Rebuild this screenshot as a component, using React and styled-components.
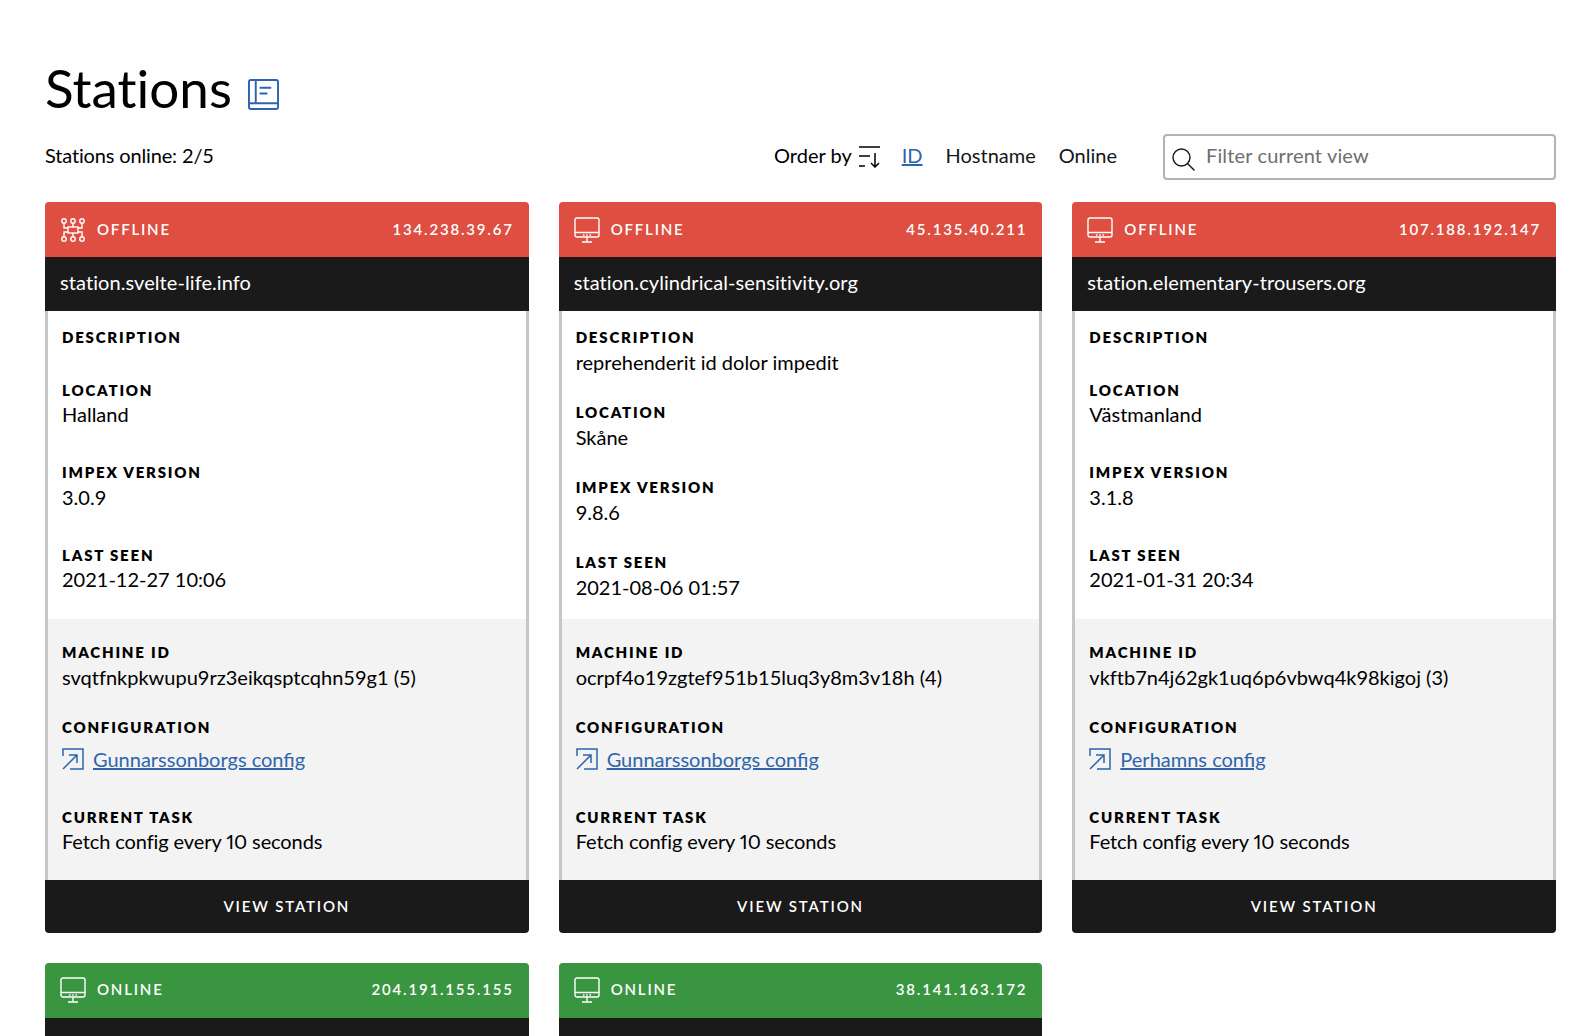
import React from 'react'
import styled, { createGlobalStyle } from 'styled-components'

const GlobalStyle = createGlobalStyle`
  body {
    margin: 0;
    background: #fefefe;
    color: #000;
    font-family: Lato, "Liberation Sans", sans-serif;
    font-size: 20px;
    font-variant-ligatures: none;
  }
`

const Page = styled.div`
  height: 1036px;
  overflow: hidden;
  box-sizing: border-box;
  padding: 55px 37px 0 45px;
`

const TitleRow = styled.div`
  display: flex;
  align-items: center;
  gap: 16px;
  height: 68px;
`

const Title = styled.h1`
  margin: 0 0 2px;
  font-size: 53px;
  font-weight: 400;
  line-height: 66px;
`

const BookIcon = styled.svg`
  width: 31px;
  height: 31px;
  margin-top: 11px;
  fill: none;
  stroke: #2d65ad;
  stroke-width: 2;
`

const Toolbar = styled.div`
  display: flex;
  align-items: center;
  margin-top: 11px;
  height: 46px;
`

const Online = styled.div`
  flex: 1;
  padding-bottom: 4px;
  letter-spacing: -0.15px;
`

const OrderBy = styled.div`
  display: flex;
  align-items: center;
  margin-right: 46px;
  padding-bottom: 4px;
`

const SortIcon = styled.svg`
  width: 22px;
  height: 22px;
  margin: 4px 21px 0 7px;
  fill: none;
  stroke: #000;
  stroke-width: 1.5;
`

const OrderLink = styled.a`
  margin-right: 23px;
  color: ${p => (p.$active ? '#2d65ad' : '#161616')};
  text-decoration: ${p => (p.$active ? 'underline' : 'none')};
  &:last-child {
    margin-right: 0;
  }
`

const Filter = styled.label`
  position: relative;
  display: block;
  width: 393px;
  height: 46px;
`

const FilterIcon = styled.svg`
  position: absolute;
  left: 9px;
  top: 14px;
  width: 23px;
  height: 23px;
  fill: none;
  stroke: #161616;
  stroke-width: 1.4;
`

const FilterInput = styled.input`
  width: 100%;
  height: 100%;
  box-sizing: border-box;
  border: 2px solid #b3b3b3;
  border-radius: 4px;
  padding: 0 12px 4px 41px;
  background: #fefefe;
  font: inherit;
  letter-spacing: 0.15px;
  outline: none;
  &::placeholder {
    color: #6f6f6f;
    opacity: 1;
  }
`

const Grid = styled.div`
  display: grid;
  grid-template-columns: repeat(3, 1fr);
  column-gap: 30px;
  row-gap: 30px;
  margin-top: 22px;
`

const Card = styled.article`
  display: flex;
  flex-direction: column;
`

const StatusBar = styled.div`
  display: flex;
  align-items: center;
  height: 55px;
  box-sizing: border-box;
  padding: 0 15px;
  border-radius: 4px 4px 0 0;
  background: ${p => (p.$online ? '#3a9541' : '#de4e41')};
  color: #fff;
  font-size: 15px;
  font-weight: 600;
  letter-spacing: 1.8px;
`

const StatusText = styled.span`
  margin-bottom: 2px;
`

const StatusIcon = styled.svg`
  width: 26px;
  height: 26px;
  margin-right: 11px;
  fill: none;
  stroke: #fff;
  stroke-width: 1.4;
`

const Ip = styled(StatusText)`
  margin-left: auto;
`

const HostBar = styled.div`
  height: 54px;
  padding: 0 15px;
  background: #1a1a1a;
  color: #fff;
  line-height: 51px;
  letter-spacing: 0.08px;
`

const Body = styled.div`
  display: flex;
  flex: 1;
  flex-direction: column;
  border: solid #c6c6c6;
  border-width: 0 3px;
`

const Details = styled.dl`
  display: grid;
  flex: 1;
  row-gap: 24.5px;
  margin: 0;
  padding: 16px 14px 16.5px;
`

const MoreDetails = styled(Details)`
  flex: none;
  row-gap: 24px;
  padding: 23px 14px 22px;
  background: #f3f3f3;
`

const Field = styled.div``

const Label = styled.dt`
  font-size: 15px;
  font-weight: 800;
  line-height: 20.5px;
  letter-spacing: 1.8px;
  text-transform: uppercase;
`

const Value = styled.dd`
  margin: 0;
  padding-bottom: 2px;
  line-height: 28px;
`

const TaskValue = styled(Value)`
  padding-bottom: 4px;
  line-height: 26px;
  font-variant-ligatures: common-ligatures;
  font-variant-numeric: proportional-nums;
  letter-spacing: -0.1px;
`

const ConfigValue = styled(Value)`
  display: flex;
  align-items: center;
  gap: 9px;
  height: 46px;
  box-sizing: border-box;
  padding-bottom: 3px;
`

const LaunchIcon = styled.svg`
  width: 22px;
  height: 22px;
  margin-top: 1px;
  fill: none;
  stroke: #2d65ad;
  stroke-width: 1.5;
`

const ConfigLink = styled.a`
  color: #2d65ad;
  text-decoration: underline;
  font-variant-ligatures: common-ligatures;
`

const ViewButton = styled.button`
  display: block;
  width: 100%;
  height: 53px;
  border: 0;
  border-radius: 0 0 4px 4px;
  background: #1a1a1a;
  color: #fff;
  font: inherit;
  font-size: 15px;
  font-weight: 600;
  letter-spacing: 1.85px;
`

const Network = () => (
  <StatusIcon viewBox="0 0 26 26">
    <circle cx="4" cy="4" r="2.2" />
    <circle cx="13" cy="4" r="2.2" />
    <circle cx="22" cy="4" r="2.2" />
    <circle cx="4" cy="22" r="2.2" />
    <circle cx="13" cy="22" r="2.2" />
    <circle cx="22" cy="22" r="2.2" />
    <rect x="8" y="10" width="10" height="6" />
    <path d="M13 6.2V10M13 16v3.8M4 6.2V11h4M22 6.2V11h-4M4 19.8V15h4M22 19.8V15h-4" />
  </StatusIcon>
)

const Monitor = () => (
  <StatusIcon viewBox="0 0 26 26">
    <rect x="1" y="1" width="24" height="19" rx="2" />
    <path d="M1 15.5h24M13 20v5M8 25h10" />
    <path d="M9 18h1.5M12.2 18h1.5M15.5 18H17" />
  </StatusIcon>
)

const stations = [
  { online: false, icon: Network, ip: '134.238.39.67', host: 'station.svelte-life.info', description: '', location: 'Halland', version: '3.0.9', seen: '2021-12-27 10:06', machine: 'svqtfnkpkwupu9rz3eikqsptcqhn59g1 (5)', config: 'Gunnarssonborgs config' },
  { online: false, icon: Monitor, ip: '45.135.40.211', host: 'station.cylindrical-sensitivity.org', description: 'reprehenderit id dolor impedit', location: 'Skåne', version: '9.8.6', seen: '2021-08-06 01:57', machine: 'ocrpf4o19zgtef951b15luq3y8m3v18h (4)', config: 'Gunnarssonborgs config' },
  { online: false, icon: Monitor, ip: '107.188.192.147', host: 'station.elementary-trousers.org', description: '', location: 'Västmanland', version: '3.1.8', seen: '2021-01-31 20:34', machine: 'vkftb7n4j62gk1uq6p6vbwq4k98kigoj (3)', config: 'Perhamns config' },
  { online: true, icon: Monitor, ip: '204.191.155.155', host: 'station.svelte-life.info', description: '', location: 'Halland', version: '3.0.9', seen: '2021-12-27 10:06', machine: 'svqtfnkpkwupu9rz3eikqsptcqhn59g1 (5)', config: 'Gunnarssonborgs config' },
  { online: true, icon: Monitor, ip: '38.141.163.172', host: 'station.elementary-trousers.org', description: '', location: 'Skåne', version: '9.8.6', seen: '2021-08-06 01:57', machine: 'ocrpf4o19zgtef951b15luq3y8m3v18h (4)', config: 'Gunnarssonborgs config' },
]

const StationCard = ({ station }) => {
  const Icon = station.icon
  return (
    <Card>
      <StatusBar $online={station.online}>
        <Icon />
        <StatusText>{station.online ? 'ONLINE' : 'OFFLINE'}</StatusText>
        <Ip>{station.ip}</Ip>
      </StatusBar>
      <HostBar>{station.host}</HostBar>
      <Body>
        <Details>
          <Field>
            <Label>Description</Label>
            {station.description && <Value>{station.description}</Value>}
          </Field>
          <Field>
            <Label>Location</Label>
            <Value>{station.location}</Value>
          </Field>
          <Field>
            <Label>Impex version</Label>
            <Value>{station.version}</Value>
          </Field>
          <Field>
            <Label>Last seen</Label>
            <Value>{station.seen}</Value>
          </Field>
        </Details>
        <MoreDetails>
          <Field>
            <Label>Machine ID</Label>
            <Value>{station.machine}</Value>
          </Field>
          <Field>
            <Label>Configuration</Label>
            <ConfigValue>
              <LaunchIcon viewBox="0 0 22 22">
                <path d="M1 8V1h20v20H8" />
                <path d="M1 21L15 7M7 7h8v8" />
              </LaunchIcon>
              <ConfigLink>{station.config}</ConfigLink>
            </ConfigValue>
          </Field>
          <Field>
            <Label>Current task</Label>
            <TaskValue>Fetch config every 10 seconds</TaskValue>
          </Field>
        </MoreDetails>
      </Body>
      <ViewButton>VIEW STATION</ViewButton>
    </Card>
  )
}

const App = () => (
  <>
    <GlobalStyle />
    <Page>
      <TitleRow>
        <Title>Stations</Title>
        <BookIcon viewBox="0 0 32 32">
          <rect x="1" y="1" width="30" height="30" rx="2" />
          <path d="M8 1v24M1 25h30M12 9h12M12 15h8" />
        </BookIcon>
      </TitleRow>
      <Toolbar>
        <Online>Stations online: 2/5</Online>
        <OrderBy>
          Order by
          <SortIcon viewBox="0 0 22 22">
            <path d="M0 1h21M0 10h11M0 20h6M16 7v14M12 17l4 4 4-4" />
          </SortIcon>
          <OrderLink $active>ID</OrderLink>
          <OrderLink>Hostname</OrderLink>
          <OrderLink>Online</OrderLink>
        </OrderBy>
        <Filter>
          <FilterIcon viewBox="0 0 23 23">
            <circle cx="9.5" cy="9.5" r="8.5" />
            <path d="M15.5 15.5l7 7" />
          </FilterIcon>
          <FilterInput placeholder="Filter current view" />
        </Filter>
      </Toolbar>
      <Grid>
        {stations.map(s => (
          <StationCard key={s.ip} station={s} />
        ))}
      </Grid>
    </Page>
  </>
)

export default App
